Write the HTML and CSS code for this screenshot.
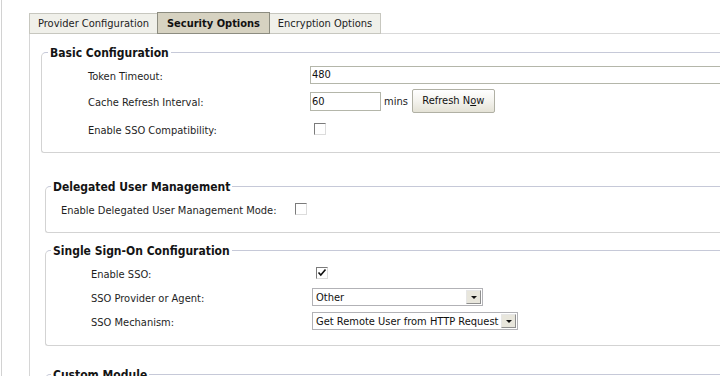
FILE: index.html
```html
<!DOCTYPE html>
<html>
<head>
<meta charset="utf-8">
<link rel="stylesheet" href="styles.css">
</head>
<body>
<div class="page">
  <div class="tabs">
    <div class="tab t1">Provider Configuration</div>
    <div class="tab t2 active">Security Options</div>
    <div class="tab t3">Encryption Options</div>
  </div>
  <div class="panel">
    <fieldset class="fs basic">
      <legend>Basic Configuration</legend>
      <div class="row r1">
        <span class="label">Token Timeout:</span>
        <span class="ctl"><span class="text-input wide">480</span></span>
      </div>
      <div class="row r2">
        <span class="label">Cache Refresh Interval:</span>
        <span class="ctl"><span class="text-input short">60</span><span class="unit">mins</span><span class="button">Refresh N<u>o</u>w</span></span>
      </div>
      <div class="row r3">
        <span class="label">Enable SSO Compatibility:</span>
        <span class="ctl"><span class="checkbox cb-basic"></span></span>
      </div>
    </fieldset>

    <fieldset class="fs deleg">
      <legend>Delegated User Management</legend>
      <div class="row rd">
        <span class="label">Enable Delegated User Management Mode:</span>
        <span class="ctl"><span class="checkbox"></span></span>
      </div>
    </fieldset>

    <fieldset class="fs sso">
      <legend>Single Sign-On Configuration</legend>
      <div class="row rs">
        <span class="label">Enable SSO:</span>
        <span class="ctl"><span class="checkbox checked cb-sso"><svg width="10" height="10" viewBox="0 0 10 10"><polyline points="1.5,4.5 3.8,7 8.5,1.5" fill="none" stroke="#111" stroke-width="1.6"/></svg></span></span>
      </div>
      <div class="row rs">
        <span class="label">SSO Provider or Agent:</span>
        <span class="ctl"><span class="select sel-other"><span class="sel-text">Other</span><span class="arrow"><span class="tri"></span></span></span></span>
      </div>
      <div class="row rs">
        <span class="label">SSO Mechanism:</span>
        <span class="ctl"><span class="select sel-mech"><span class="sel-text">Get Remote User from HTTP Request</span><span class="arrow"><span class="tri"></span></span></span></span>
      </div>
    </fieldset>

    <fieldset class="fs custom">
      <legend>Custom Module</legend>
      <div class="spacer"></div>
    </fieldset>
  </div>
</div>
</body>
</html>
```

FILE: styles.css
```css
html, body {
  margin: 0;
  padding: 0;
  background: #ffffff;
  overflow: hidden;
}
body {
  font-family: "DejaVu Sans Condensed", "DejaVu Sans", "Liberation Sans", sans-serif;
  font-size: 11px;
  color: #1e1e1e;
  width: 720px;
  height: 376px;
}
.page {
  margin-left: 1px;
  border-left: 1px solid #d2d2d2;
  padding: 12px 0 0 27px;
  width: 719px;
  height: 376px;
  box-sizing: border-box;
  overflow: hidden;
}
.tabs {
  display: flex;
  align-items: flex-end;
  height: 22px;
  position: relative;
  z-index: 2;
}
.tab {
  box-sizing: border-box;
  height: 21px;
  line-height: 18px;
  padding-top: 1px;
  border: 1px solid #c7c7bf;
  background: #f0f0ea;
  text-align: center;
  margin-right: -1px;
  color: #222;
  white-space: nowrap;
}
.t1 { width: 129px; }
.t2 { width: 113px; }
.t3 { width: 112px; }
.tab.active {
  height: 22px;
  line-height: 19px;
  background: #d6d2c1;
  border-color: #8c8c80;
  font-weight: bold;
  color: #111;
  position: relative;
  z-index: 1;
}
.panel {
  margin-top: -1px;
  border-top: 1px solid #d9d9d9;
  border-left: 1px solid #d6d6d6;
  width: 900px;
  padding: 10px 0 0 11px;
  height: 400px;
  box-sizing: border-box;
}
.fs {
  margin: 0;
  min-width: 0;
  border: 1px solid #d3d3d3;
  border-top-color: #c6c9d8;
  border-right: none;
  border-radius: 5px 0 0 3px;
}
.fs legend {
  box-sizing: border-box;
  font-size: 12px;
  font-weight: bold;
  line-height: 14px;
  height: 16px;
  padding: 2px 2px 0 2px;
  color: #141414;
}
.basic {
  padding: 2px 0 8px 46px;
}
.basic legend { margin-left: -40px; }
.deleg {
  margin-left: 4px;
  margin-top: 25px;
  padding: 6px 0 14px 15px;
}
.deleg legend { margin-left: -10px; }
.sso {
  margin-left: 4px;
  margin-top: 9px;
  padding: 3px 0 12px 45px;
}
.sso legend { margin-left: -40px; }
.custom {
  margin-left: 4px;
  margin-top: 20px;
  padding: 0 0 0 45px;
}
.custom legend { margin-left: -40px; }
.spacer { height: 30px; }

.row {
  display: grid;
  align-items: center;
  white-space: nowrap;
}
.label { padding-top: 2px; }
.basic .row { grid-template-columns: 222px 1fr; }
.r1 { height: 26px; }
.r2 { height: 26px; }
.r3 { height: 30px; }
.rd { grid-template-columns: 234px 1fr; height: 18px; }
.rs { grid-template-columns: 220px 1fr; height: 24px; }

.ctl {
  display: flex;
  align-items: center;
}
.text-input {
  box-sizing: border-box;
  display: block;
  height: 18px;
  line-height: 16px;
  border: 1px solid #b4b6aa;
  padding-left: 1px;
  background: #fff;
  color: #111;
}
.text-input.wide { width: 600px; }
.text-input.short { width: 71px; height: 19px; line-height: 17px; }
.unit { margin-left: 3px; color: #222; }
.button {
  box-sizing: border-box;
  margin-left: 4px;
  width: 83px;
  height: 24px;
  line-height: 22px;
  text-align: center;
  border: 1px solid #b0b0a4;
  border-radius: 2px;
  background: linear-gradient(#ffffff, #f4f3ee 50%, #e4e2d6);
  color: #111;
}
.button u { text-decoration: underline; }

.checkbox {
  box-sizing: border-box;
  display: block;
  width: 12px;
  height: 12px;
  border: 1px solid #dcdcdc;
  border-top-color: #7b7b7b;
  border-left-color: #7b7b7b;
  background: #fff;
  margin-left: 0;
}
.cb-basic { margin-left: 4px; }
.cb-sso { margin-left: 5px; }
.checkbox svg { display: block; }

.select {
  box-sizing: border-box;
  display: flex;
  align-items: center;
  height: 18px;
  border: 1px solid #b2b2b6;
  background: #fff;
  padding-right: 1px;
  margin-left: 1px;
}
.sel-other { width: 171px; }
.sel-mech { width: 206px; }
.sel-text {
  flex: 1;
  padding-left: 3px;
  color: #111;
  overflow: hidden;
}
.arrow {
  box-sizing: border-box;
  width: 15px;
  height: 14px;
  border: 1px solid #8f8f8f;
  border-top-color: #e6e6e6;
  border-left-color: #e6e6e6;
  background: #e8e6dc;
  display: flex;
  align-items: center;
  justify-content: center;
}
.tri {
  width: 0;
  height: 0;
  border-left: 3px solid transparent;
  border-right: 3px solid transparent;
  border-top: 3px solid #111;
  margin-top: 1px;
}
```
